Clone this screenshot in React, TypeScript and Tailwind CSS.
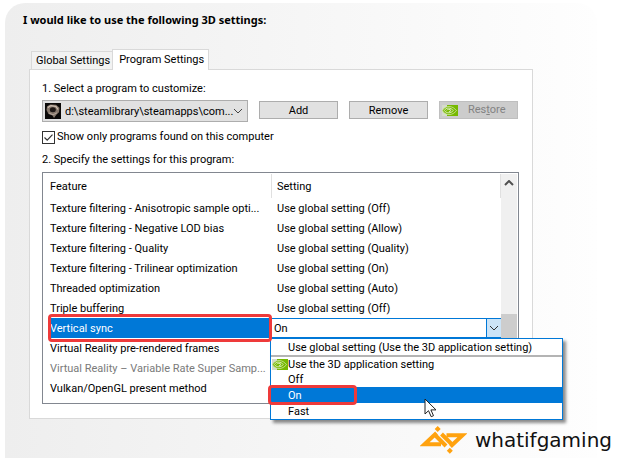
import React, { useState } from 'react'

const features = [
    { name: 'Texture filtering - Anisotropic sample opti...', setting: 'Use global setting (Off)' },
    { name: 'Texture filtering - Negative LOD bias', setting: 'Use global setting (Allow)' },
    { name: 'Texture filtering - Quality', setting: 'Use global setting (Quality)' },
    { name: 'Texture filtering - Trilinear optimization', setting: 'Use global setting (On)' },
    { name: 'Threaded optimization', setting: 'Use global setting (Auto)' },
    { name: 'Triple buffering', setting: 'Use global setting (Off)' },
    { name: 'Vertical sync', setting: 'On', active: true },
    { name: 'Virtual Reality pre-rendered frames', setting: '' },
    { name: 'Virtual Reality – Variable Rate Super Samp...', setting: '', disabled: true },
    { name: 'Vulkan/OpenGL present method', setting: '' },
]

const syncOptions = ['Use the 3D application setting', 'Off', 'On', 'Fast']

function NvidiaEye({ className }: { className?: string }) {
    return (
        <svg viewBox="0 0 16 11" className={className} aria-hidden="true">
            <rect width="16" height="11" fill="#d5dccb" />
            <path d="M5 0h11v11H5z" fill="#76b900" />
            <path d="M.3 5.500C1.800 3 4 1.500 7 1.500c3.200 0 5.600 1.800 7.500 4.200C12.500 8 10 9.600 7 9.600 4 9.600 1.700 8 .3 5.500z" fill="#76b900" stroke="#dbe9bd" strokeWidth=".7" />
            <path d="M2.300 5.400c1-1.500 2.300-2.300 4.300-2.300 2 0 3.600 1 4.700 2.400-1.300 1.500-2.700 2.300-4.500 2.300C4.900 7.800 3.100 7 2.300 5.400zM4.600 5.500c.5-.8 1.200-1.200 2.100-1.200 1 0 1.700.5 2.300 1.200-.6.7-1.300 1.100-2.100 1.100" fill="none" stroke="#eef5df" strokeWidth=".8" />
        </svg>
    )
}

function ProgramIcon() {
    return (
        <svg viewBox="0 0 16 16" className="h-4 w-4 shrink-0" aria-hidden="true">
            <rect width="16" height="16" fill="#0b0908" />
            <path d="M2 3.500L5 1.500l6 .3 3.500 3-.5 4.500-2.500 2.200L9 15l-1.500-2.500L3.500 11 1.500 7z" fill="#85766a" />
            <path d="M2.800 4.500L6 2.600l5 .9 2 3" fill="none" stroke="#d0c2b5" strokeWidth="1.200" />
            <ellipse cx="7.800" cy="6.800" rx="3" ry="2.500" fill="#1d1715" />
            <path d="M4 10l4 1.800 4-2" fill="none" stroke="#b3a498" strokeWidth="1" />
        </svg>
    )
}

function Chevron({ className, up }: { className?: string; up?: boolean }) {
    return (
        <svg viewBox="0 0 10 6" className={className} fill="none" stroke="currentColor" aria-hidden="true">
            <path d={up ? 'M1 5l4-4 4 4' : 'M1 1l4 4 4-4'} />
        </svg>
    )
}

function Brand() {
    return (
        <div className="absolute right-[15px] bottom-1 flex items-center gap-2">
            <svg viewBox="0 0 47 28" className="h-7 w-[47px]" aria-hidden="true">
                <g fill="none" stroke="#ffa20f" strokeWidth="4">
                    <path d="M16.500 7L4.500 18.300H21" />
                    <path d="M14.500 8.500L26 20" />
                    <path d="M21.500 8L33 19.500" />
                    <path d="M26.500 9.300H42.500L30.500 20.500" />
                </g>
                <path d="M17.700 0l3 3-3 3-3-3zM29.800 21.800l3 3-3 3-3-3z" fill="#ffa20f" />
            </svg>
            <span className="font-['DejaVu_Sans',sans-serif] text-[20px] leading-6 text-[#111]">whatifgaming</span>
        </div>
    )
}

function SyncMenu({ value, onPick }: { value: string; onPick: (v: string) => void }) {
    return (
        <div
            role="listbox"
            aria-label="Vertical sync options"
            className="absolute top-full -left-0.5 z-10 mt-px w-[293px] border border-[#0078d7] bg-white text-black shadow-[3px_3px_3px_rgba(0,0,0,0.45)]"
        >
            <button type="button" role="option" aria-selected={false} className="flex h-4 w-full items-center pt-0.5 pl-[17px] text-left">
                Use global setting (Use the 3D application setting)
            </button>
            <div className="h-0.5 bg-[#b4b4b4]" />
            {syncOptions.map((option, i) => (
                <button
                    key={option}
                    type="button"
                    role="option"
                    aria-selected={option === value}
                    onClick={() => onPick(option)}
                    className={`relative flex w-full items-center text-left ${i < 2 ? 'h-[15px]' : 'h-4 pt-0.5'} ${option === value ? 'bg-[#0078d7] text-white' : ''}`}
                >
                    <span className="flex w-[17px] shrink-0 pl-px">
                        {i === 0 && <NvidiaEye className="h-[11px] w-4" />}
                    </span>
                    {option}
                    {option === value && (
                        <span className="absolute -inset-y-0.5 -left-[3px] w-[89px] rounded-sm border-3 border-[#ee3a3a]" />
                    )}
                </button>
            ))}
            <svg viewBox="0 0 13 20" className="absolute top-[59px] left-[153px] h-5 w-[13px]" aria-hidden="true">
                <path d="M1 1v15l3.500-3.300 2.700 6 2.300-1-2.600-5.800H12z" fill="#fff" stroke="#222" />
            </svg>
        </div>
    )
}

export default function App() {
    const [onlyFound, setOnlyFound] = useState(true)
    const [sync, setSync] = useState('On')

    return (
        <div className="relative flex min-h-screen flex-col bg-white pt-[3px] font-['Roboto',sans-serif] text-[11px] leading-4 text-black">
            <main className="mr-[30px] ml-[5px] flex-1 rounded-t-[20px] bg-linear-to-r from-[#eeeeee] to-[#fefefe] pt-[9px] pr-16 pl-6">
                <h1 className="-ml-1.5 font-['Noto_Sans',sans-serif] text-[11px] leading-4 font-bold">I would like to use the following 3D settings:</h1>

                <div role="tablist" className="relative mt-[21px] flex items-end pl-0.5">
                    <button type="button" role="tab" aria-selected={false} className="mb-px h-[18px] border border-r-0 border-b-0 border-[#d9d9d9] bg-[#f2f2f2] pt-px pr-0.5 pl-1">
                        Global Settings
                    </button>
                    <button type="button" role="tab" aria-selected={true} className="h-[21px] border border-b-0 border-[#d9d9d9] bg-white pr-1 pl-1.5">
                        Program Settings
                    </button>
                </div>

                <section className="-mt-px border border-[#d9d9d9] bg-white pt-[11px] pr-[13px] pb-3.5 pl-3">
                    <label htmlFor="program" className="block">1. Select a program to customize:</label>
                    <div className="mt-[3px] flex items-start gap-[11px] pr-px">
                        <div className="relative flex h-[22px] flex-1 items-center border border-[#adadad] bg-[#e1e1e1] pl-0.5">
                            <ProgramIcon />
                            <select id="program" className="h-5 min-w-0 flex-1 appearance-none pt-0.5 pl-1 outline-none">
                                <option>d:\steamlibrary\steamapps\com...</option>
                            </select>
                            <Chevron className="pointer-events-none absolute right-1 h-1.5 w-2.5 text-[#444]" />
                        </div>
                        <button type="button" className="mt-px h-[18px] w-[79px] border border-[#adadad] bg-[#e1e1e1] pt-px">Add</button>
                        <button type="button" className="mt-px h-[18px] w-[79px] border border-[#adadad] bg-[#e1e1e1] pt-px">Remove</button>
                        <button type="button" disabled className="mt-px flex h-[18px] w-[79px] items-center gap-2.5 border border-[#bfbfbf] bg-[#cccccc] pl-0.5 text-[#838383]">
                            <NvidiaEye className="h-[11px] w-4" />
                            <span>Res<u>t</u>ore</span>
                        </button>
                    </div>

                    <div className="mt-[7px] flex items-center gap-0.5">
                        <span className="relative flex h-[13px] w-[13px]">
                            <input
                                id="onlyFound"
                                type="checkbox"
                                checked={onlyFound}
                                onChange={e => setOnlyFound(e.target.checked)}
                                className="h-[13px] w-[13px] appearance-none border border-[#333] bg-white"
                            />
                            {onlyFound && (
                                <svg viewBox="0 0 13 13" className="pointer-events-none absolute inset-0" fill="none" stroke="#333" strokeWidth="1.200" aria-hidden="true">
                                    <path d="M2.500 6.500l2.700 2.700 5.300-5.500" />
                                </svg>
                            )}
                        </span>
                        <label htmlFor="onlyFound">Show only programs found on this computer</label>
                    </div>

                    <h2 className="mt-[7px]">2. Specify the settings for this program:</h2>

                    <div className="mt-1 flex border border-[#828790] p-px">
                        <table className="mb-1 min-w-0 flex-1 table-fixed border-separate border-spacing-0 text-left">
                            <thead>
                                <tr className="h-6">
                                    <th className="w-[228px] border-r border-[#e0e0e0] p-0 pt-0.5 pl-1.5 font-normal">Feature</th>
                                    <th className="border-r border-[#e0e0e0] p-0 pt-0.5 pl-[5px] font-normal">Setting</th>
                                </tr>
                            </thead>
                            <tbody>
                                {features.map(f => (
                                    <tr key={f.name} className="h-5">
                                        <td className={`relative p-0 pl-1.5 whitespace-nowrap ${f.active ? '' : 'pt-0.5'} ${f.disabled ? 'text-[#7a7a7a]' : ''}`}>
                                            {f.active ? (
                                                <div className="h-5 bg-[#0078d7] pt-0.5 leading-[18px] text-white">
                                                    {f.name}
                                                    <span className="absolute -inset-y-1 left-1 right-0 z-20 rounded-sm border-3 border-[#ee3a3a]" />
                                                </div>
                                            ) : f.name}
                                        </td>
                                        <td className={f.active ? 'p-0' : 'p-0 pt-0.5 pl-[5px]'}>
                                            {f.active ? (
                                                <div className="relative flex h-5 border-y border-[#0078d7]">
                                                    <select
                                                        aria-label={f.name}
                                                        value={sync}
                                                        onChange={e => setSync(e.target.value)}
                                                        className="min-w-0 flex-1 appearance-none pt-0.5 pl-0.5 outline-none"
                                                    >
                                                        {syncOptions.map(o => <option key={o}>{o}</option>)}
                                                    </select>
                                                    <span className="pointer-events-none flex w-[15px] items-center justify-center border-l border-[#0078d7] bg-[#cce4f7]">
                                                        <Chevron className="h-1.5 w-2.5 text-[#333]" />
                                                    </span>
                                                    <SyncMenu value={sync} onPick={setSync} />
                                                </div>
                                            ) : f.setting}
                                        </td>
                                    </tr>
                                ))}
                            </tbody>
                        </table>
                        <div className="flex w-4 flex-col items-center bg-[#f0f0f0]">
                            <Chevron up className="mt-1.5 h-1.5 w-2.5 stroke-2 text-[#505050]" />
                            <div className="mt-auto mb-4 h-[72px] w-full bg-[#cdcdcd]" />
                        </div>
                    </div>
                </section>
            </main>
            <Brand />
        </div>
    )
}
